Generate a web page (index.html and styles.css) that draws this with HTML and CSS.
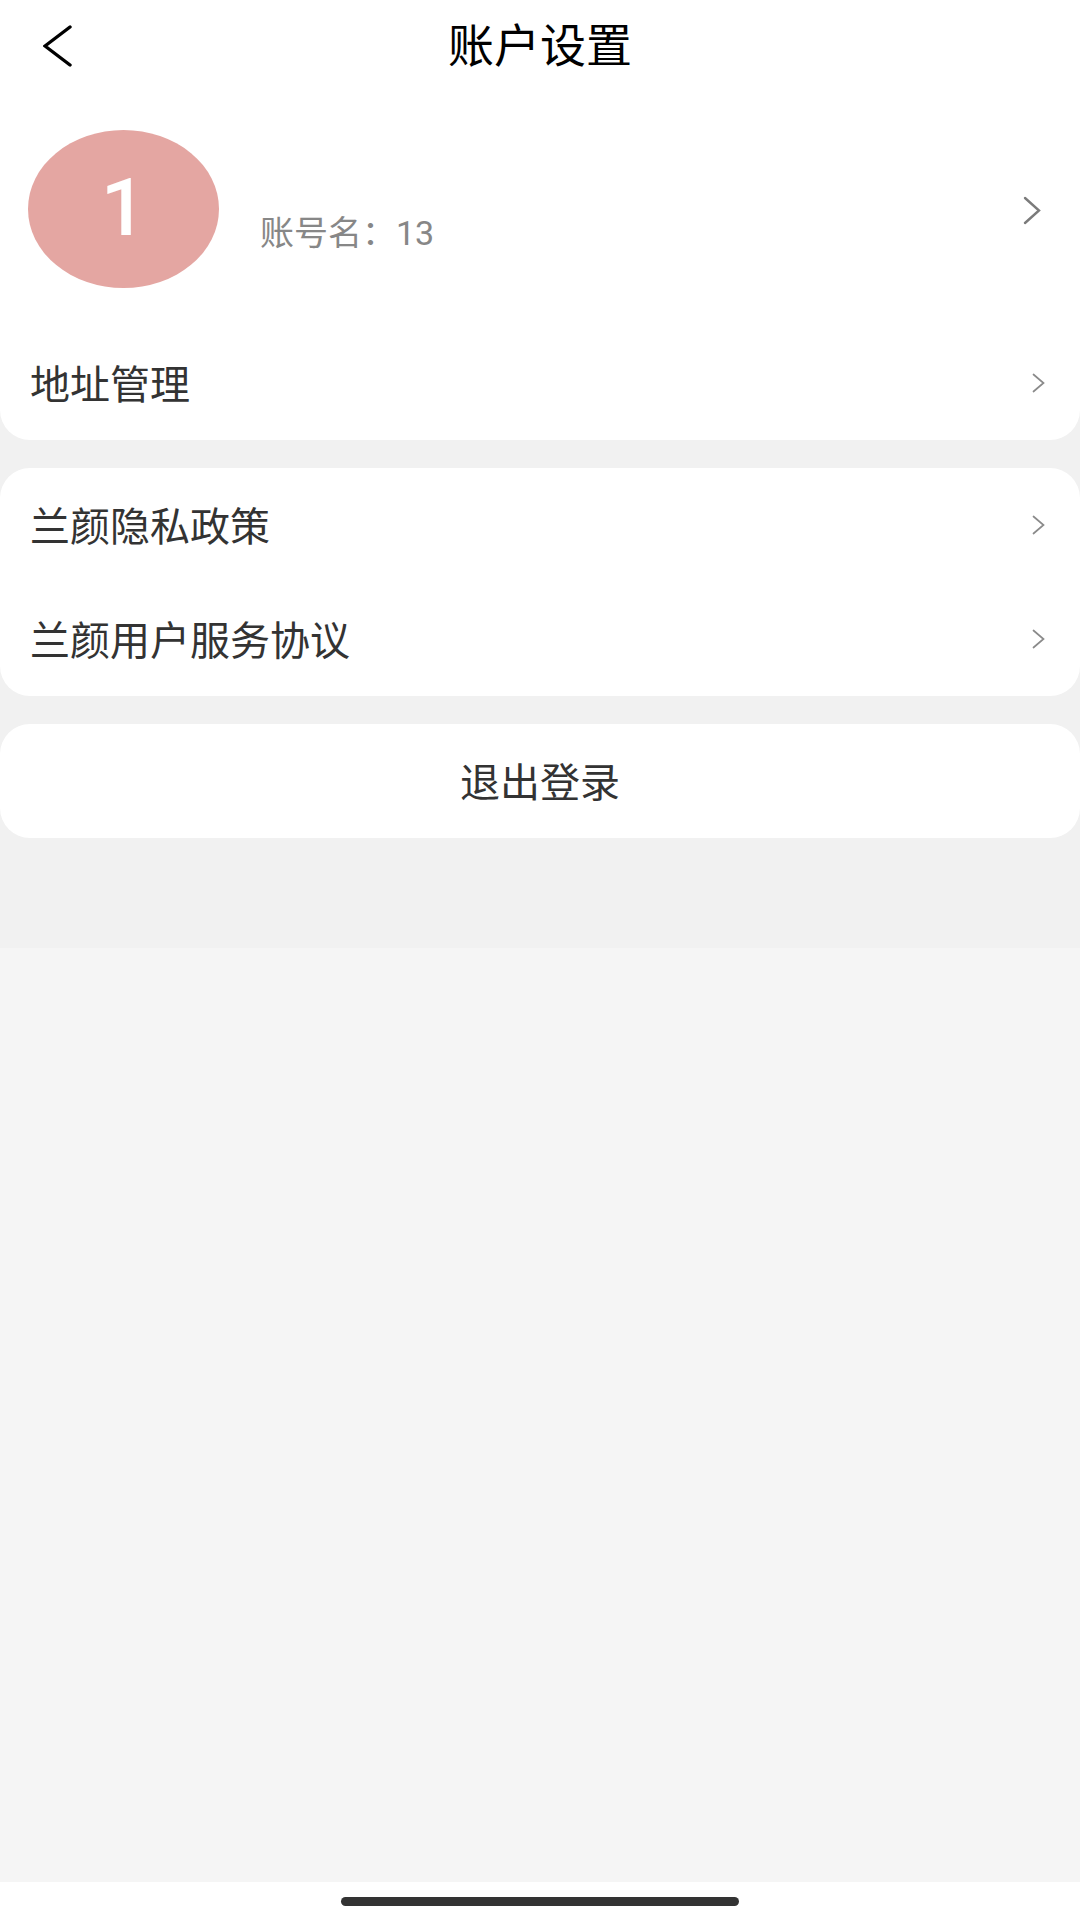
FILE: index.html
```html
<!DOCTYPE html>
<html lang="zh-CN">
<head>
<meta charset="utf-8">
<title>账户设置</title>
<link rel="stylesheet" href="styles.css">
</head>
<body>
<div class="page">
  <div class="gray-area">
    <section class="top-block">
      <header class="topbar">
        <span class="back">
          <svg width="30" height="42" viewBox="0 0 30 42"><polyline points="27,2 2,21 27,40" fill="none" stroke="#000" stroke-width="3.4" stroke-linecap="round" stroke-linejoin="miter"/></svg>
        </span>
        <h1 class="title">账户设置</h1>
        <span class="spacer"></span>
      </header>
      <div class="profile-row">
        <div class="avatar"><span>1</span></div>
        <div class="info">
          <div class="account">账号名：13</div>
        </div>
        <svg class="chev-lg" width="18" height="29" viewBox="0 0 18 29"><polyline points="2,2 16,14.5 2,27" fill="none" stroke="#7b7b7b" stroke-width="2.4" stroke-linecap="round"/></svg>
      </div>
      <div class="row row-first">
        <span class="row-label">地址管理</span>
        <svg class="chev" width="13" height="20" viewBox="0 0 13 20"><polyline points="1.5,1.5 11.5,10 1.5,18.5" fill="none" stroke="#8a8a8a" stroke-width="1.7" stroke-linecap="round"/></svg>
      </div>
    </section>

    <section class="card">
      <div class="row row-tall">
        <span class="row-label">兰颜隐私政策</span>
        <svg class="chev" width="13" height="20" viewBox="0 0 13 20"><polyline points="1.5,1.5 11.5,10 1.5,18.5" fill="none" stroke="#8a8a8a" stroke-width="1.7" stroke-linecap="round"/></svg>
      </div>
      <div class="row row-tall">
        <span class="row-label">兰颜用户服务协议</span>
        <svg class="chev" width="13" height="20" viewBox="0 0 13 20"><polyline points="1.5,1.5 11.5,10 1.5,18.5" fill="none" stroke="#8a8a8a" stroke-width="1.7" stroke-linecap="round"/></svg>
      </div>
    </section>

    <section class="card logout">
      <span class="logout-label">退出登录</span>
    </section>
  </div>

  <div class="rest"></div>

  <div class="home-area"><span class="home-bar"></span></div>
</div>
</body>
</html>
```

FILE: styles.css
```css
* {
  box-sizing: border-box;
}

html, body {
  margin: 0;
  padding: 0;
}

body {
  font-family: Roboto, "Noto Sans CJK SC", "Noto Sans", sans-serif;
  color: #333;
  background: #f5f5f5;
}

.page {
  width: 1080px;
  height: 1920px;
  display: flex;
  flex-direction: column;
}

.gray-area {
  background: #f1f1f1;
  padding-bottom: 110px;
  display: flex;
  flex-direction: column;
}

.top-block {
  background: #fff;
  border-radius: 0 0 30px 30px;
}

.topbar {
  height: 90px;
  display: grid;
  grid-template-columns: 1fr auto 1fr;
  align-items: center;
  padding: 0 43px;
}

.back {
  display: flex;
  align-items: center;
  height: 42px;
  margin-top: 2px;
}

.title {
  margin: 0;
  font-size: 46px;
  font-weight: 400;
  color: #000;
  line-height: 1;
  font-family: "Noto Sans CJK SC", sans-serif;
  margin-top: -6px;
}

.profile-row {
  display: flex;
  align-items: center;
  padding: 40px 39px 38px 28px;
}

.avatar {
  width: 191px;
  height: 158px;
  border-radius: 50%;
  background: #e4a6a2;
  display: flex;
  align-items: center;
  justify-content: center;
  flex-shrink: 0;
}

.avatar span {
  color: #fff;
  font-family: Roboto, sans-serif;
  font-size: 80px;
  font-weight: 500;
  line-height: 1;
  margin-top: -2px;
}

.info {
  flex: 1;
  padding-left: 41px;
  padding-top: 48px;
}

.account {
  font-size: 34px;
  color: #878787;
  line-height: 1;
}

.chev-lg {
  flex-shrink: 0;
  margin-top: 2px;
}

.row {
  height: 106px;
  display: flex;
  align-items: center;
  justify-content: space-between;
  padding: 0 35px 0 30px;
}

.row-first {
  height: 114px;
}

.row-tall {
  height: 114px;
}

.row-label {
  font-size: 40px;
  line-height: 1;
  color: #333;
  font-family: "Noto Sans CJK SC", sans-serif;
  margin-top: -3px;
}

.card {
  background: #fff;
  border-radius: 30px;
  margin-top: 28px;
}

.card.logout {
  margin-top: 28px;
  height: 114px;
  display: flex;
  align-items: center;
  justify-content: center;
}

.logout-label {
  font-size: 40px;
  line-height: 1;
  color: #333;
  font-family: "Noto Sans CJK SC", sans-serif;
  margin-top: -2px;
}

.rest {
  flex: 1;
  background: #f5f5f5;
}

.home-area {
  height: 38px;
  background: #fff;
  display: flex;
  justify-content: center;
  padding-top: 15px;
}

.home-bar {
  display: block;
  width: 398px;
  height: 9px;
  border-radius: 5px;
  background: #333;
}
```
